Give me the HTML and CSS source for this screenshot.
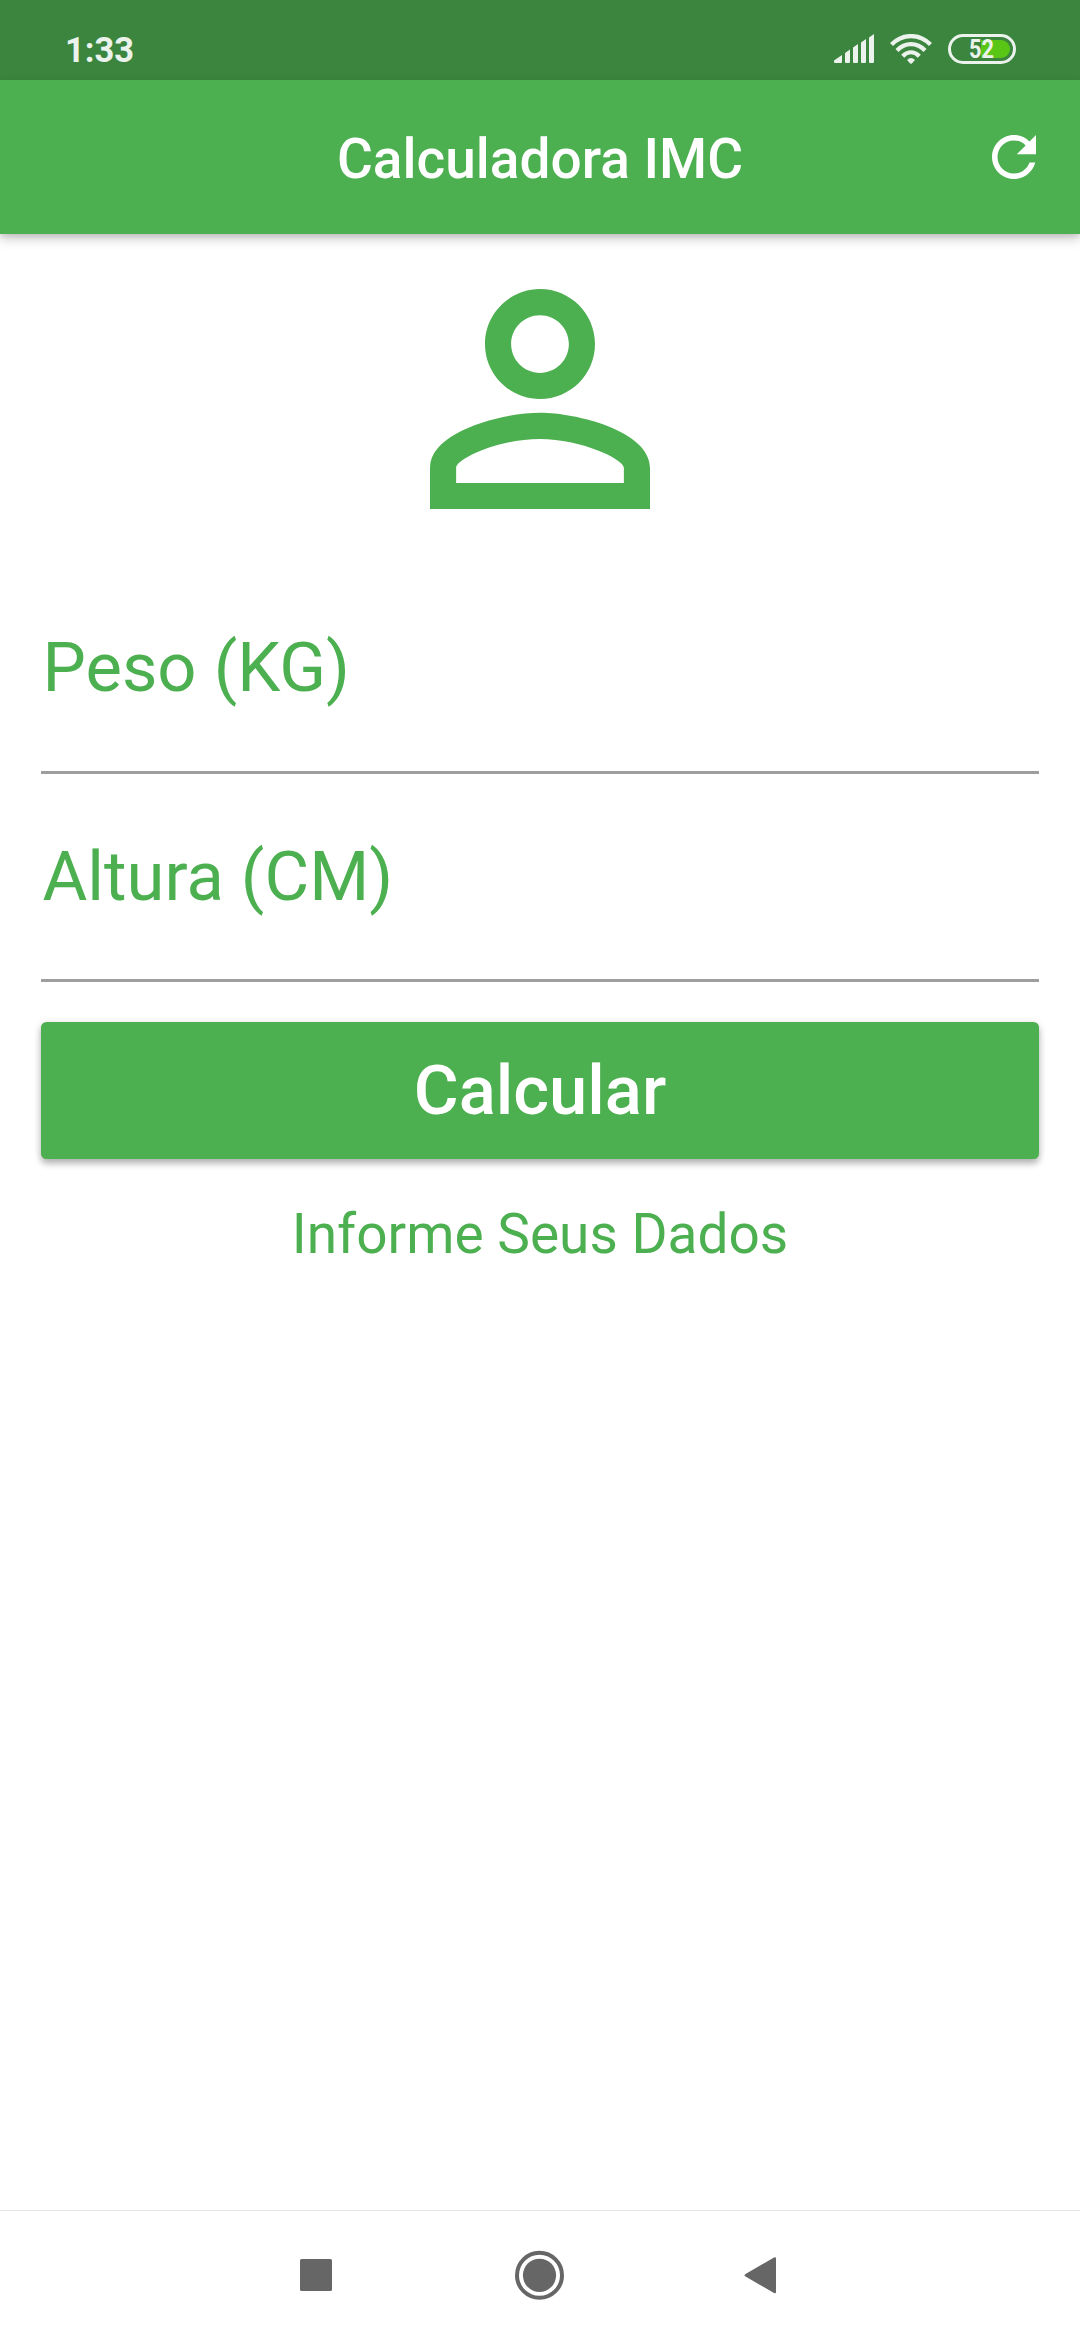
FILE: index.html
```html
<!DOCTYPE html>
<html lang="pt-BR">
<head>
  <meta charset="utf-8">
  <title>Calculadora IMC</title>
  <link rel="stylesheet" href="styles.css">
</head>
<body>
  <div class="screen">
    <div class="status-bar">
      <span class="clock">1:33</span>
      <div class="indicators">
        <svg class="signal" width="40" height="29" viewBox="0 0 40 29" fill="currentColor">
          <path d="M0 26.500L8 21V28q0 1-1 1H1q-1 0-1-1zM11 19l5-3.500V28q0 1-1 1h-3q-1 0-1-1zM19 13.500L24 10V28q0 1-1 1h-3q-1 0-1-1zM27 8.500L32 5V28q0 1-1 1h-3q-1 0-1-1zM35 3.500L40 0V28q0 1-1 1h-3q-1 0-1-1z"/>
        </svg>
        <svg class="wifi" width="42" height="30" viewBox="0 0 42 30">
          <g fill="none" stroke="currentColor" stroke-width="4.200">
            <path d="M1.500 10.500C12.500-.8 29.500-.8 40.500 10.500"/>
            <path d="M7 16.500C15 8.100 27 8.100 35 16.500"/>
            <path d="M12.700 22.200C17.600 16.900 24.400 16.900 29.300 22.200"/>
          </g>
          <path fill="currentColor" d="M17 26q4-3.800 8 0l-3 3.300q-1 1-2 0z"/>
        </svg>
        <div class="battery"><div class="charge"><span class="level">52</span></div></div>
      </div>
    </div>
    <header class="app-bar">
      <h1 class="title">Calculadora IMC</h1>
      <button class="refresh" aria-label="Limpar">
        <svg width="66" height="66" viewBox="0 0 24 24" fill="currentColor"><path d="M17.650 6.350C16.200 4.900 14.210 4 12 4c-4.420 0-7.990 3.580-7.990 8s3.570 8 7.990 8c3.730 0 6.840-2.550 7.730-6h-2.080c-.82 2.330-3.040 4-5.650 4-3.310 0-6-2.690-6-6s2.690-6 6-6c1.660 0 3.140.69 4.220 1.780L13 11h7V4l-2.350 2.350z"/></svg>
      </button>
    </header>
    <main class="form">
      <svg class="person" width="330" height="330" viewBox="0 0 24 24" fill="currentColor"><path d="M12 5.900c1.160 0 2.100.94 2.100 2.100s-.94 2.100-2.100 2.100S9.900 9.160 9.900 8s.94-2.100 2.100-2.100m0 9c2.970 0 6.100 1.460 6.100 2.100v1.100H5.900V17c0-.64 3.130-2.100 6.100-2.100M12 4C9.790 4 8 5.790 8 8s1.790 4 4 4 4-1.790 4-4-1.790-4-4-4zm0 9c-2.670 0-8 1.340-8 4v3h16v-3c0-2.660-5.330-4-8-4z"/></svg>
      <div class="field weight">Peso (KG)</div>
      <div class="field height">Altura (CM)</div>
      <button class="calculate">Calcular</button>
      <p class="info">Informe Seus Dados</p>
    </main>
    <nav class="nav-bar">
      <svg width="480" height="60" viewBox="0 0 480 60" fill="#666">
        <rect x="0" y="14" width="32" height="32" rx="1.500"/>
        <circle cx="239.500" cy="30.300" r="22.500" fill="none" stroke="#666" stroke-width="4"/>
        <circle cx="239.500" cy="30.300" r="16.600"/>
        <path d="M445.500 29L474 12.600q2-1 2 1V47q0 2-2 1L445.500 31.600q-2-1.300 0-2.600z"/>
      </svg>
    </nav>
  </div>
</body>
</html>
```
FILE: styles.css
```css
* {
  box-sizing: border-box;
}

body {
  margin: 0;
  background: #fff;
  font-family: Roboto, sans-serif;
}

button {
  border: 0;
  padding: 0;
  font: inherit;
  color: inherit;
}

.screen {
  display: flex;
  flex-direction: column;
  width: 1080px;
  height: 2340px;
  color: #4caf50;
}

.status-bar {
  display: flex;
  justify-content: space-between;
  flex: none;
  height: 80px;
  padding: 34px 64px 0 65px;
  background: #3b853e;
  color: #ebf3ec;
}

.clock {
  font-size: 34.5px;
  font-weight: 700;
  line-height: 32px;
}

.indicators {
  display: flex;
  align-items: flex-start;
}

.wifi {
  margin: 0 16px;
}

.battery {
  width: 68px;
  height: 30px;
  padding: 3px;
  border: 3px solid #ebf3ec;
  border-radius: 15px;
}

.charge {
  width: 56px;
  height: 18px;
  padding-left: 15px;
  border-radius: 9px;
  background: linear-gradient(to right, transparent 27px, #59c616 27px);
}

.level {
  display: block;
  width: 30px;
  font-size: 25px;
  font-weight: 700;
  line-height: 20px;
  transform: scaleX(0.87);
  transform-origin: left;
}

.app-bar {
  display: grid;
  grid-template-columns: 132px 1fr 132px;
  align-items: center;
  flex: none;
  height: 154px;
  background: #4caf50;
  color: #fff;
  box-shadow: 0 5px 11px rgba(0, 0, 0, 0.2), 0 3px 4px rgba(0, 0, 0, 0.08);
}

.title {
  grid-column: 2;
  margin: 0;
  padding-top: 4px;
  font-size: 55px;
  font-weight: 500;
  line-height: 64px;
  text-align: center;
}

.refresh {
  width: 66px;
  height: 66px;
  margin-left: 33px;
  background: none;
}

.refresh svg,
.person {
  display: block;
}

.form {
  display: flex;
  flex-direction: column;
  flex: 1;
  padding: 0 41px;
}

.person {
  align-self: center;
}

.field {
  padding-left: 1.5px;
  font-size: 68.75px;
  line-height: 80px;
  border-bottom: 3px solid #9e9e9e;
}

.weight {
  height: 210px;
  padding-top: 64px;
}

.height {
  height: 208px;
  padding-top: 63px;
}

.calculate {
  flex: none;
  height: 137px;
  margin-top: 40px;
  border-radius: 5.5px;
  background: #4caf50;
  color: #fff;
  font-size: 68.75px;
  font-weight: 500;
  line-height: 137px;
  box-shadow: 0 5px 6px rgba(0, 0, 0, 0.2), 0 2px 8px rgba(0, 0, 0, 0.16);
}

.info {
  margin: 43px 0 0;
  font-size: 55px;
  line-height: 64px;
  text-align: center;
}

.nav-bar {
  flex: none;
  height: 130px;
  padding: 34px 0 0 300px;
  border-top: 1px solid #e4e4e4;
}
```
